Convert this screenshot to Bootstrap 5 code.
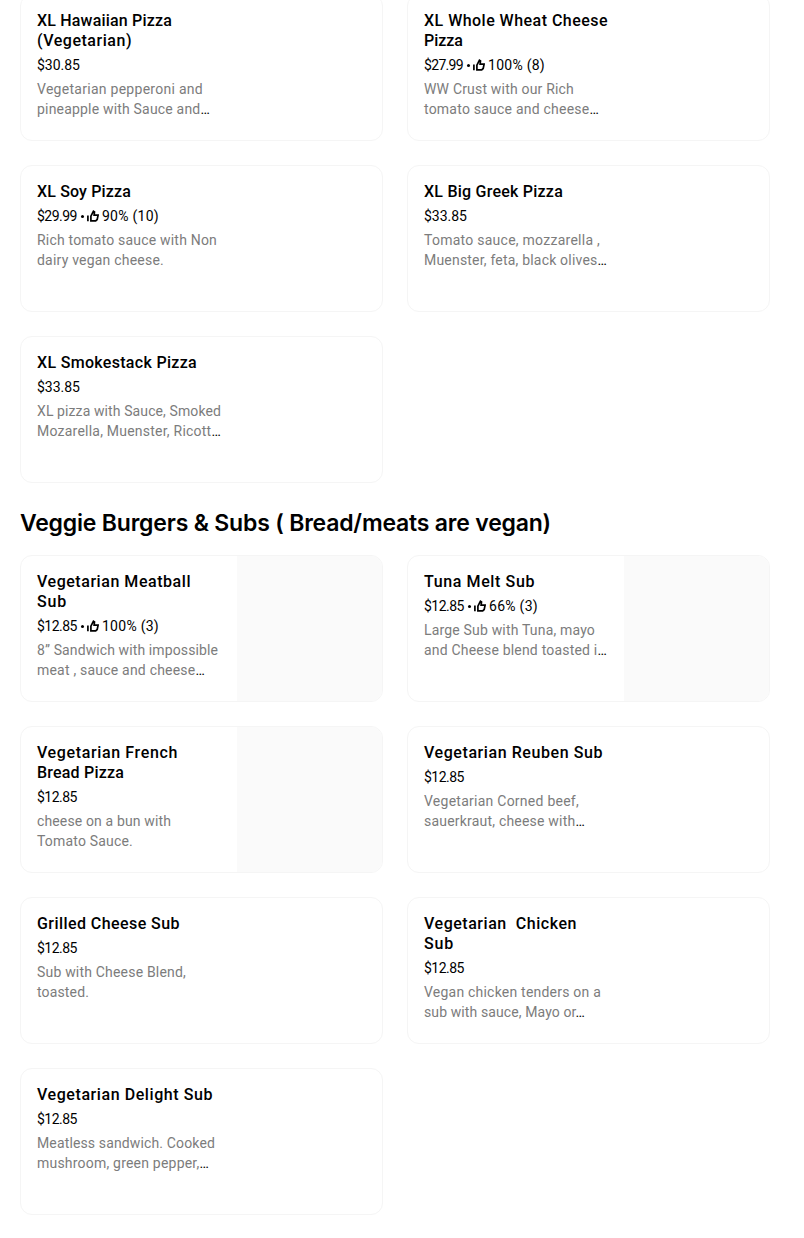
<!DOCTYPE html>
<html lang="en">
<head>
<meta charset="utf-8">
<meta name="viewport" content="width=device-width, initial-scale=1">
<title>Menu</title>
<link href="https://cdn.jsdelivr.net/npm/bootstrap@5.3.0/dist/css/bootstrap.min.css" rel="stylesheet">
<style>
body{font-family:Roboto,"Liberation Sans",sans-serif;color:#000;background:#fff;overflow:hidden;height:1238px}
.menu{width:750px;margin:-6px 0 0 20px}
.menu-grid{display:grid;grid-template-columns:1fr 1fr;gap:24px}
.menu-item{height:147px;border:1px solid #f5f5f5;border-radius:12px}
.menu-copy{padding:16px 0 0 16px;width:216px}
.menu-photo{background:#fafafa;width:145px}
.line{display:block;width:max-content;white-space:pre;line-height:20px}
.item-title{font-size:16px;font-weight:500}
.item-price{font-size:14px;margin:4px 0}
.item-desc{font-size:14px;color:#7c7c7c}
.item-desc b{color:#000;font-weight:400}
.section-title{font:600 23px/32px Inter,"Liberation Sans",sans-serif;margin:24px 0 16px;width:max-content;white-space:pre}
.dot{width:3px;height:3px;border-radius:50%;background:#000;margin:0 0 0 4px}
.thumb{width:12px;height:12px;margin:0 3px 0 3px}
</style>
</head>
<body>
<main class="menu">
<section class="menu-grid" id="pizzas"></section>
<h2 class="section-title" data-w="531">Veggie Burgers &amp; Subs ( Bread/meats are vegan)</h2>
<section class="menu-grid" id="subs"></section>
</main>
<script src="https://cdn.jsdelivr.net/npm/bootstrap@5.3.0/dist/js/bootstrap.bundle.min.js"></script>
<script>
// Each text line is [text, width in px]; ratings follow the price.
const pizzas=[
{t:[["XL Hawaiian Pizza",135],["(Vegetarian)",95]],p:["$30.85",43],d:[["Vegetarian pepperoni and",166],["pineapple with Sauce and…",173]]},
{t:[["XL Whole Wheat Cheese",184],["Pizza",39]],p:["$27.99",39],r:["100% (8)",57],d:[["WW Crust with our Rich",150],["tomato sauce and cheese…",175]]},
{t:[["XL Soy Pizza",94]],p:["$29.99",40],r:["90% (10)",57],d:[["Rich tomato sauce with Non",180],["dairy vegan cheese.",127]]},
{t:[["XL Big Greek Pizza",139]],p:["$33.85",43],d:[["Tomato sauce, mozzarella ,",176],["Muenster, feta, black olives…",183]]},
{t:[["XL Smokestack Pizza",160]],p:["$33.85",43],d:[["XL pizza with Sauce, Smoked",184],["Mozarella, Muenster, Ricott…",184]]}];
const subs=[
{img:1,t:[["Vegetarian Meatball",154],["Sub",30]],p:["$12.85",40],r:["100% (3)",57],d:[["8” Sandwich with impossible",181],["meat , sauce and cheese…",168]]},
{img:1,t:[["Tuna Melt Sub",111]],p:["$12.85",40],r:["66% (3)",49],d:[["Large Sub with Tuna, mayo",171],["and Cheese blend toasted i…",183]]},
{img:1,t:[["Vegetarian French",141],["Bread Pizza",87]],p:["$12.85",40],d:[["cheese on a bun with",134],["Tomato Sauce.",96]]},
{t:[["Vegetarian Reuben Sub",179]],p:["$12.85",40],d:[["Vegetarian Corned beef,",155],["sauerkraut, cheese with…",161]]},
{t:[["Grilled Cheese Sub",143]],p:["$12.85",40],d:[["Sub with Cheese Blend,",149],["toasted.",52]]},
{t:[["Vegetarian  Chicken",153],["Sub",30]],p:["$12.85",40],d:[["Vegan chicken tenders on a",177],["sub with sauce, Mayo or…",161]]},
{t:[["Vegetarian Delight Sub",176]],p:["$12.85",40],d:[["Meatless sandwich. Cooked",178],["mushroom, green pepper,…",172]]}];
const thumb='<svg class="thumb" viewBox="0 0 12 12" fill="none" stroke="#000" stroke-width="1.7"><path d="M.9 5.4v5.8M3.9 10.8V6.1L6.4 1.3l1.1.7-.4 3.1h4l-.9 4.4-1.5 1.3z"/></svg>';
const line=l=>`<span class="line" data-w="${l[1]}">${l[0].replace('…','<b>…</b>')}</span>`;
const item=i=>`<article class="menu-item d-flex justify-content-between overflow-hidden">
<div class="menu-copy"><h3 class="item-title m-0">${i.t.map(line).join('')}</h3>
<div class="item-price d-flex align-items-center">${line(i.p)}${i.r?`<span class="dot"></span>${thumb}${line(i.r)}`:''}</div>
<p class="item-desc m-0">${i.d.map(line).join('')}</p></div>${i.img?'<div class="menu-photo"></div>':''}</article>`;
document.getElementById('pizzas').innerHTML=pizzas.map(item).join('');
document.getElementById('subs').innerHTML=subs.map(item).join('');
document.querySelectorAll('[data-w]').forEach(e=>{
  const n=e.textContent.length;
  e.style.letterSpacing=((e.dataset.w-e.getBoundingClientRect().width)/n).toFixed(3)+'px';
});
</script>
</body>
</html>
